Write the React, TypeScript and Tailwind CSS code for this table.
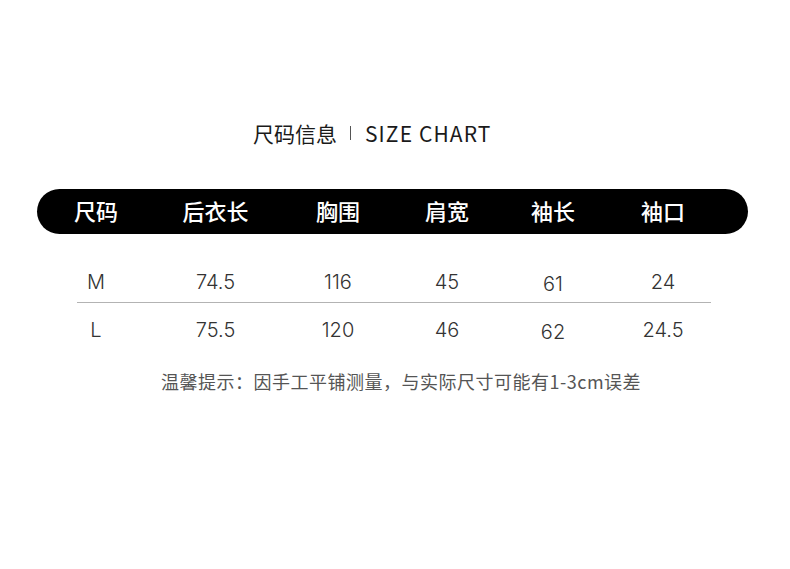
import React from "react";

const cols = "grid grid-cols-[118px_121px_124px_94px_118px_102px]";
const cjk = "font-['Noto_Sans_CJK_SC','Noto_Sans',sans-serif]";
const num = "font-['Inter','Noto_Sans',sans-serif]";

const headers = ["尺码", "后衣长", "胸围", "肩宽", "袖长", "袖口"];
const rows = [
  ["M", "74.5", "116", "45", "61", "24"],
  ["L", "75.5", "120", "46", "62", "24.5"],
];

export default function App() {
  return (
    <div className={`w-[790px] h-[569px] bg-white flex flex-col ${cjk}`}>
      <div className="mt-[118px] h-[30px] pl-[253px] flex items-center text-[#1a1a1a]">
        <span className="text-[21px] leading-none">尺码信息</span>
        <span className="ml-[13px] mr-[14px] w-px h-[14px] bg-[#555]" />
        <span className="text-[21px] leading-none tracking-[1.1px]">SIZE CHART</span>
      </div>

      <div className={`mt-[41px] ml-[37px] w-[711px] h-[45px] rounded-full bg-black text-white ${cols} items-center`}>
        {headers.map((h) => (
          <div key={h} className="text-center text-[22px] font-medium leading-none pb-[3px]">
            {h}
          </div>
        ))}
      </div>

      <div className={`mt-[28px] ml-[37px] h-[40px] ${cols} items-center text-[#333] ${num}`}>
        {rows[0].map((v, i) => (
          <div key={i} className={`text-center text-[20px] font-light leading-none ${i === 4 ? "pt-[3px]" : ""}`}>
            {v}
          </div>
        ))}
      </div>
      <div className="ml-[77px] w-[634px] h-px bg-[#b3b3b3]" />
      <div className={`mt-[7px] ml-[37px] h-[40px] ${cols} items-center text-[#333] ${num}`}>
        {rows[1].map((v, i) => (
          <div key={i} className={`text-center text-[20px] font-light leading-none ${i === 4 ? "pt-[3px]" : ""}`}>
            {v}
          </div>
        ))}
      </div>

      <div className="mt-[20px] h-[22px] pl-[161px] flex items-center text-[#555] text-[18px] leading-none tracking-[0.5px]">
        温馨提示：因手工平铺测量，与实际尺寸可能有1-3cm误差
      </div>
    </div>
  );
}
